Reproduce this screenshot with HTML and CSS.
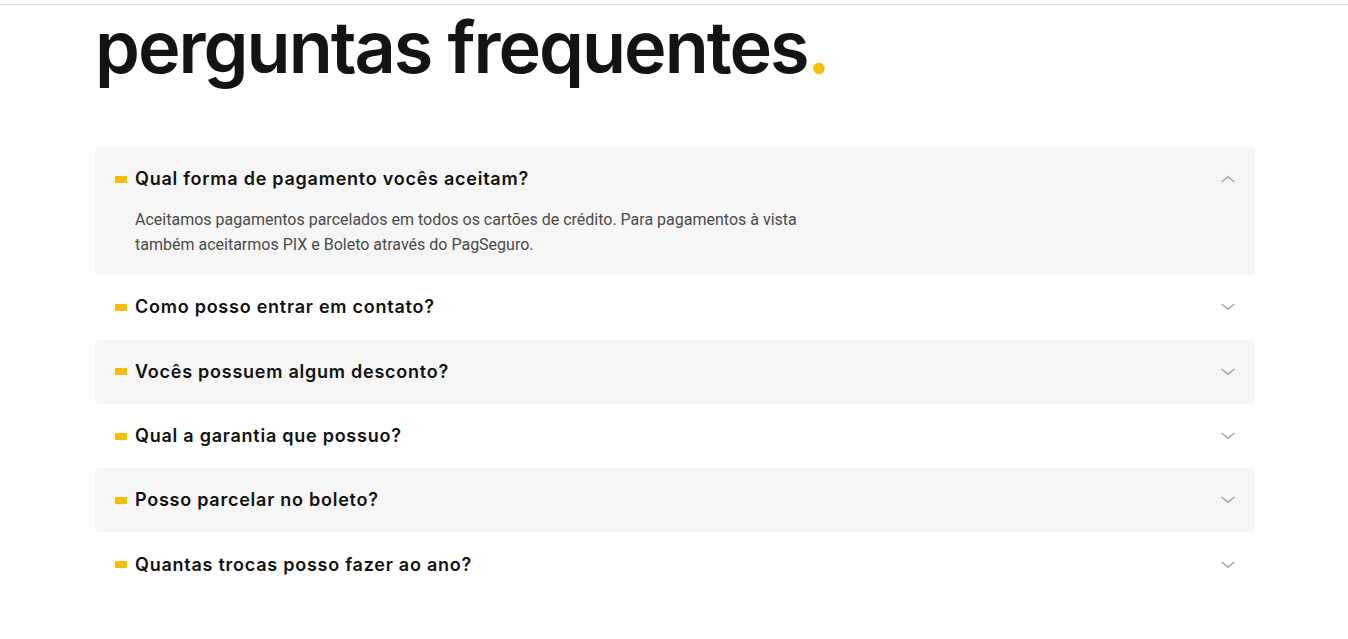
FILE: index.html
```html
<!DOCTYPE html>
<html lang="pt-BR">
<head>
<meta charset="utf-8">
<title>Perguntas frequentes</title>
<link rel="stylesheet" href="styles.css">
</head>
<body>
<div class="topbar"></div>
<section class="faq">
  <h1 class="faq-title">perguntas frequentes<span class="dot">.</span></h1>
  <div class="faq-list">
    <div class="faq-item open">
      <div class="faq-q">
        <span class="marker"></span>
        <span class="q-text">Qual forma de pagamento vocês aceitam?</span>
        <svg class="chev" width="16" height="8" viewBox="0 0 16 8"><polyline points="1.5,7 8,1.8 14.5,7" fill="none" stroke="#a9a9a9" stroke-width="1.6"/></svg>
      </div>
      <p class="faq-a">Aceitamos pagamentos parcelados em todos os cartões de crédito. Para pagamentos à vista também aceitarmos PIX e Boleto através do PagSeguro.</p>
    </div>
    <div class="faq-item">
      <div class="faq-q">
        <span class="marker"></span>
        <span class="q-text">Como posso entrar em contato?</span>
        <svg class="chev" width="16" height="8" viewBox="0 0 16 8"><polyline points="1.5,1 8,6.2 14.5,1" fill="none" stroke="#a9a9a9" stroke-width="1.6"/></svg>
      </div>
    </div>
    <div class="faq-item">
      <div class="faq-q">
        <span class="marker"></span>
        <span class="q-text">Vocês possuem algum desconto?</span>
        <svg class="chev" width="16" height="8" viewBox="0 0 16 8"><polyline points="1.5,1 8,6.2 14.5,1" fill="none" stroke="#a9a9a9" stroke-width="1.6"/></svg>
      </div>
    </div>
    <div class="faq-item">
      <div class="faq-q">
        <span class="marker"></span>
        <span class="q-text">Qual a garantia que possuo?</span>
        <svg class="chev" width="16" height="8" viewBox="0 0 16 8"><polyline points="1.5,1 8,6.2 14.5,1" fill="none" stroke="#a9a9a9" stroke-width="1.6"/></svg>
      </div>
    </div>
    <div class="faq-item">
      <div class="faq-q">
        <span class="marker"></span>
        <span class="q-text">Posso parcelar no boleto?</span>
        <svg class="chev" width="16" height="8" viewBox="0 0 16 8"><polyline points="1.5,1 8,6.2 14.5,1" fill="none" stroke="#a9a9a9" stroke-width="1.6"/></svg>
      </div>
    </div>
    <div class="faq-item">
      <div class="faq-q">
        <span class="marker"></span>
        <span class="q-text">Quantas trocas posso fazer ao ano?</span>
        <svg class="chev" width="16" height="8" viewBox="0 0 16 8"><polyline points="1.5,1 8,6.2 14.5,1" fill="none" stroke="#a9a9a9" stroke-width="1.6"/></svg>
      </div>
    </div>
  </div>
</section>
</body>
</html>
```

FILE: styles.css
```css
* { box-sizing: border-box; }
html, body { margin: 0; padding: 0; background: #fff; }
body { font-family: Inter, "Open Sans", sans-serif; color: #111; }

.topbar {
  height: 5px;
  border-bottom: 1px solid #dedede;
}

.faq {
  width: 1160px;
  margin: 0 0 0 95px;
}

.faq-title {
  margin: 6px 0 64px 0;
  font-family: Inter, sans-serif;
  font-weight: 600;
  font-size: 72px;
  line-height: 72px;
  letter-spacing: -2px;
  color: #131313;
}
.faq-title .dot { color: #fbbc05; }

.faq-list {
  display: flex;
  flex-direction: column;
}

.faq-item {
  border-radius: 4px;
  background: #fff;
}
.faq-item:nth-child(odd) { background: #f6f6f6; }

.faq-q {
  display: flex;
  align-items: center;
  padding: 20px 19px 20px 20px;
  height: 64.3px;
}

.marker {
  width: 12px;
  height: 7px;
  background: #fbbc05;
  margin-right: 8px;
  flex: none;
}

.q-text {
  flex: 1;
  font-family: Inter, sans-serif;
  font-weight: 600;
  font-size: 18px;
  line-height: 24px;
  letter-spacing: 0.75px;
  color: #111;
}

.chev { flex: none; }

.faq-a {
  margin: -4px 0 0 0;
  padding: 0 20px 18px 40px;
  max-width: 760px;
  font-family: Roboto, sans-serif;
  font-size: 16px;
  line-height: 25px;
  color: #4a4a4a;
}
```
